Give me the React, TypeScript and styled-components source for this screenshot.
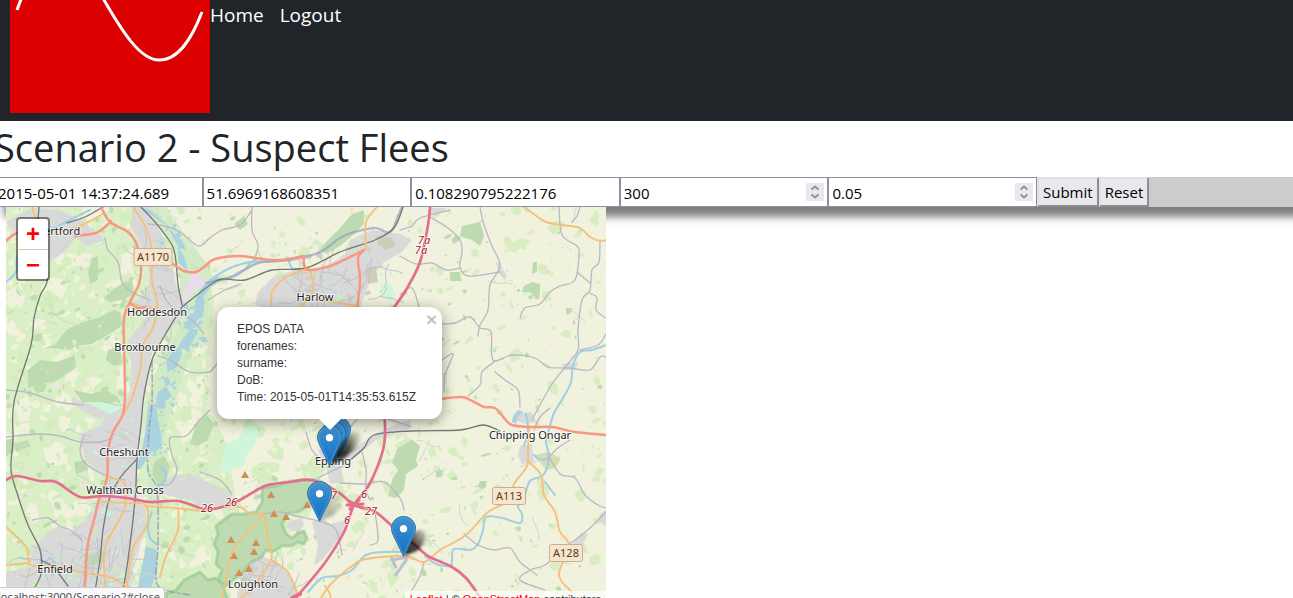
import React from "react";
import styled, { createGlobalStyle } from "styled-components";

const uiFont = `"Open Sans", "Noto Sans", sans-serif`;

const GlobalStyle = createGlobalStyle`
  *, *::before, *::after { box-sizing: border-box; }
  html, body { margin: 0; height: 100%; overflow: hidden; }
  body { background: #fff; color: #212529; font-family: ${uiFont}; font-size: 15px; }
`;

const Header = styled.header`
  display: flex;
  align-items: flex-start;
  padding: 0 10px 8px;
  background: #212529;
`;

const Logo = styled.svg`
  display: block;
  flex: none;
  width: 200px;
  height: 113px;
  background: #dc0000;
`;

const Nav = styled.nav`
  display: flex;
  gap: 16px;
`;

const NavLink = styled.a`
  color: #fff;
  font-size: 19px;
  line-height: 30px;
  text-decoration: none;
`;

const Content = styled.main`
  margin-left: -6px;
`;

const Title = styled.h1`
  margin: 0;
  padding: 2px 0 6px;
  font-size: 38px;
  font-weight: 400;
  line-height: 48px;
`;

const QueryBar = styled.form`
  display: flex;
  height: 30px;
  background: #cdcbcc;
  box-shadow: 10px 10px 8px #808080;
`;

const Fields = styled.div`
  display: flex;
  flex: 0 1 1043px;
  min-width: 0;
`;

const Field = styled.div`
  display: flex;
  flex: 1 1 0;
  align-items: center;
  min-width: 0;
  padding-right: 3px;
  border: 1px solid #8f8f9d;
  background: #fff;
`;

const FieldInput = styled.input`
  flex: 1;
  min-width: 0;
  height: 28px;
  padding: 2px 3px 0;
  border: 0;
  outline: 0;
  background: none;
  color: #000;
  font: 15px ${uiFont};
  appearance: textfield;
  &::-webkit-inner-spin-button { display: none; }
`;

const Spinner = styled.svg`
  flex: none;
  width: 18px;
  height: 18px;
  background: #e9e9ed;
  fill: none;
  stroke: #8f8f9d;
  stroke-width: 2;
`;

const BarButton = styled.button`
  padding: 0 4px;
  border: 2px outset #e0e0e4;
  background: #e9e9ed;
  color: #000;
  font: 15px ${uiFont};
`;

const MapFrame = styled.section`
  position: relative;
  max-width: 600px;
  height: 400px;
  margin-left: 12px;
  overflow: hidden;
  background: #f1f2dd;
  font-family: "Liberation Sans", Arial, sans-serif;
`;

const Tiles = styled.svg`
  display: block;
  width: 100%;
  height: 400px;
`;

const ZoomControl = styled.div`
  position: absolute;
  top: 10px;
  left: 10px;
  width: 34px;
  border: 2px solid rgba(0, 0, 0, 0.45);
  border-radius: 4px;
  background: #fff;
  background-clip: padding-box;
`;

const ZoomLink = styled.a`
  display: block;
  height: 30px;
  color: #f00;
  font: bold 24px/30px "Liberation Sans", Arial, sans-serif;
  text-align: center;
  text-decoration: none;
  & + & { border-top: 1px solid #ccc; }
`;

const Pin = styled.svg<{ $x: number; $y: number }>`
  position: absolute;
  left: ${(p) => p.$x - 12}px;
  top: ${(p) => p.$y - 41}px;
  width: 25px;
  height: 41px;
  overflow: visible;
`;

const Popup = styled.div`
  position: absolute;
  left: 211px;
  top: 100px;
  width: 225px;
  padding: 14px 20px 13px;
  border-radius: 12px;
  background: #fff;
  box-shadow: 0 3px 14px rgba(0, 0, 0, 0.4);
  color: #333;
  font-size: 12px;
  line-height: 17px;
  white-space: nowrap;
  &::after {
    content: "";
    position: absolute;
    top: 100%;
    left: 102px;
    border: 11px solid transparent;
    border-top-color: #fff;
    border-bottom: 0;
  }
`;

const PopupClose = styled.a`
  position: absolute;
  top: 4px;
  right: 5px;
  color: #c3c3c3;
  font: bold 19px/17px "Liberation Sans", Arial, sans-serif;
  text-decoration: none;
`;

const Attribution = styled.div`
  position: absolute;
  right: 0;
  bottom: 0;
  padding: 0 5px;
  background: rgba(255, 255, 255, 0.7);
  color: #333;
  font-size: 11px;
  line-height: 16px;
  a { color: #f00; text-decoration: none; }
`;

const LinkStatus = styled.div`
  position: fixed;
  left: -4px;
  bottom: -9px;
  padding: 0 4px 0 1px;
  border: 1px solid #ccc;
  border-radius: 0 4px 0 0;
  background: #f9f9fb;
  color: #444;
  font-size: 11px;
  line-height: 18px;
`;

/* Deterministic scatter for fields and copses */
function makeRandom(seed: number) {
  let s = seed;
  return () => {
    s = (s * 1664525 + 1013904223) % 4294967296;
    return s / 4294967296;
  };
}

type Box = [number, number, number, number];

function scatter(seed: number, n: number, [x0, y0, x1, y1]: Box, min: number, max: number) {
  const r = makeRandom(seed);
  let d = "";
  for (let i = 0; i < n; i++) {
    const cx = x0 + r() * (x1 - x0);
    const cy = y0 + r() * (y1 - y0);
    const size = min + r() * r() * (max - min);
    const turn = r() < 0.5 ? 0.3 + r() * 0.3 : 1.7 + r() * 0.4;
    const stretch = 0.25 + r() * 0.7;
    const corners = 5;
    for (let k = 0; k < corners; k++) {
      const a = (k / corners) * Math.PI * 2;
      const m = size * (0.6 + r() * 0.7);
      const px = Math.cos(a) * m;
      const py = Math.sin(a) * m * stretch;
      const x = cx + px * Math.cos(turn) + py * Math.sin(turn);
      const y = cy + py * Math.cos(turn) - px * Math.sin(turn);
      d += `${k ? "L" : "M"}${x.toFixed(1)} ${y.toFixed(1)}`;
    }
    d += "Z";
  }
  return d;
}

function streets(seed: number, n: number, [x0, y0, x1, y1]: Box) {
  const r = makeRandom(seed);
  let d = "";
  for (let i = 0; i < n; i++) {
    let x = x0 + r() * (x1 - x0);
    let y = y0 + r() * (y1 - y0);
    let a = (Math.floor(r() * 4) * Math.PI) / 2 + 0.3;
    d += `M${x.toFixed(1)} ${y.toFixed(1)}`;
    for (let k = 0; k < 4; k++) {
      a += (r() - 0.5) * 0.9;
      x += Math.cos(a) * 6;
      y += Math.sin(a) * 6;
      d += `L${x.toFixed(1)} ${y.toFixed(1)}`;
    }
  }
  return d;
}

/* Smooth line through a list of "x,y" points */
function curve(points: string) {
  const p = points.split(" ").map((t) => t.split(",").map(Number));
  let d = `M${p[0][0]} ${p[0][1]}`;
  for (let i = 0; i < p.length - 1; i++) {
    const a = p[i - 1] || p[i];
    const b = p[i];
    const c = p[i + 1];
    const e = p[i + 2] || c;
    d += `C${b[0] + (c[0] - a[0]) / 6} ${b[1] + (c[1] - a[1]) / 6} ${c[0] - (e[0] - b[0]) / 6} ${c[1] - (e[1] - b[1]) / 6} ${c[0]} ${c[1]}`;
  }
  return d;
}

const lines = (list: string[]) => list.map(curve).join("");

const greenBelt: Box = [6, 207, 210, 600];
const eastFields: Box = [205, 207, 606, 607];
const middle: Box = [160, 400, 420, 607];
const wholeMap: Box = [6, 207, 606, 607];

const towns = [
  "M132 207L148 207 152 218 164 238 172 262 176 285 184 300 190 312 178 322 164 335 152 352 147 375 144 400 140 430 137 470 138 500 146 510 146 530 134 560 130 607 6 607 6 572 34 566 30 552 46 534 58 526 70 532 86 520 94 505 100 494 106 480 100 474 86 460 80 440 84 432 96 428 104 420 92 416 72 404 72 398 90 404 110 414 122 408 130 392 131 362 128 340 140 326 148 314 134 302 148 290 150 262 138 240 132 228Z",
  "M258 292L272 278 300 268 322 270 345 254 350 240 372 230 400 234 412 240 402 252 384 262 372 276 366 292 360 308 272 312 255 305Z",
  "M6 222L32 208 60 210 84 222 96 232 106 240 88 246 76 238 66 250 50 262 44 250 20 240Z",
  "M160 484L176 474 196 476 212 484 232 492 232 503 206 508 190 500 170 496 160 492Z",
  "M238 588L246 566 262 556 276 562 292 578 300 607 236 607Z",
  "M312 522L322 518 330 524 346 520 342 534 330 550 322 560 314 566 318 545Z",
  "M318 450L332 446 346 454 372 436 392 426 410 420 412 428 376 440 352 460 340 462 344 482 330 484 326 466Z",
  "M516 414L532 412 536 422 526 424 514 420ZM520 446L532 444 534 462 522 464 518 456Z",
  "M496 262L500 264 507 276 505 281 498 272Z",
  "M430 208L446 208 438 216 430 214Z",
  "M562 364L578 362 576 370 564 370Z",
  "M572 544L582 532 588 534 584 542 574 550ZM600 514L606 510 606 526 598 520Z",
  "M288 522L302 518 304 526 298 532 292 530 286 526Z",
];

const woods = [
  "M40 350L56 344 66 330 82 322 98 318 114 310 120 312 122 326 112 332 102 338 92 344 76 346 70 350 50 348Z",
  "M28 370L40 360 56 362 74 356 76 368 64 376 54 382 40 384 28 388Z",
  "M104 298L112 290 124 282 132 280 134 294 122 300 110 302Z",
  "M92 258L98 256 98 280 90 284 88 272Z",
  "M74 390L90 394 106 390 116 396 112 404 98 402 82 402Z",
  "M108 350L120 346 122 364 114 366 106 360Z",
  "M196 424L206 414 214 424 208 440 198 446 190 444Z",
  "M154 462L164 456 170 466 166 482 158 484 152 474Z",
  "M462 226L480 222 484 236 480 246 472 240 460 236Z",
  "M450 272L460 272 461 281 450 281Z",
  "M524 286L532 282 540 284 540 294 536 298 530 292 522 292Z",
  "M533 262L537 262 537 272 532 274Z",
  "M398 448L412 440 420 446 416 460 418 466 406 474 404 490 396 498 388 496 392 480 398 470 392 462Z",
  "M566 308L572 308 570 314 566 314Z",
  "M340 228L352 214 364 210 364 224 352 236 340 246 326 254 320 250 328 240Z",
  "M84 556L102 550 104 562 90 566Z",
  "M14 444L28 440 30 446 16 452Z",
  "M74 462L86 460 88 470 76 474Z",
  "M6 440L14 438 14 452 6 456ZM240 580L246 574 248 584 242 588Z",
  "M234 224L244 216 248 224 240 230Z",
];

const forest =
  "M262 488L276 486 290 481 304 480 318 480 330 487 324 492 316 500 308 506 300 511 288 514 282 524 286 534 292 538 298 533 304 531 307 538 304 544 298 542 292 546 282 546 272 552 266 550 262 557 250 563 242 574 232 580 226 586 218 580 222 570 216 564 218 552 214 544 218 534 216 526 224 520 232 514 244 514 256 512 262 502ZM166 607L166 594 176 590 184 580 192 576 200 572 208 580 216 578 222 584 228 600 224 607Z";

const lakes = [
  "M138 207L150 210 164 222 174 234 182 240 186 250 180 248 174 240 168 226 158 220 150 214Z",
  "M178 248L184 256 188 270 184 268 178 262Z",
  "M200 290L208 282 218 276 222 280 210 288 204 296 204 312 196 322 190 330 186 322 194 312 196 300Z",
  "M182 340L192 328 198 332 192 342 188 350 178 348Z",
  "M172 352L180 346 182 354 176 368 168 372 166 362Z",
  "M158 392L166 386 172 396 164 402 160 408 156 404Z",
  "M148 406L156 404 158 420 162 440 158 450 150 452 146 460 140 470 136 468 142 448 146 428Z",
  "M146 546L157 550 157 572 150 590 138 587 142 566Z",
  "M513 416L518 410 524 412 518 416 516 424 512 422Z",
];

const rivers = [
  "6,282 16,272 18,256 36,238 70,220 90,210",
  "210,280 228,279 242,272 254,260 262,258",
  "196,302 206,285 226,270 250,262 270,262 296,258",
  "288,258 292,268 300,269",
  "606,345 592,350 580,352 573,365 571,382 563,398 554,413 550,426 546,442 549,456 544,474 530,481 525,495 518,506 522,514 520,523 502,518 486,517 483,530 478,544 470,550 454,549 452,560 450,566 436,564 425,556",
  "549,458 540,460 534,455",
  "545,482 555,495",
  "409,552 385,552 366,555 352,570 338,576 322,578 308,592",
  "152,512 148,525 150,538 158,545",
  "526,414 528,430 524,446",
  "44,566 50,558 56,566 52,576",
  "160,466 166,474 164,482 158,486",
];

const minorRoads = [
  "480,207 484,225 492,246 500,266 490,285 488,310 480,325 478,336",
  "430,217 448,228 460,240 462,252 460,266 468,276 500,272",
  "400,256 416,264 432,263 446,270 460,268",
  "559,207 562,235 577,246 579,255 575,280 560,286 550,292 540,304 525,308 520,318",
  "600,240 599,262 592,270 590,290 582,300 578,330 578,350 566,366 552,384 540,405 532,420",
  "577,272 590,283",
  "590,293 597,298 596,310 606,318",
  "606,334 598,345 580,350",
  "442,324 455,323 470,317 480,328 491,332 493,360 512,355 535,358 548,367 570,368 590,370 600,357 606,357",
  "494,362 482,372 480,385 468,396",
  "495,372 505,380 518,390 520,407",
  "442,360 453,354 445,375 444,392",
  "207,240 222,230 240,225 252,210",
  "252,207 252,230 258,245 255,258",
  "105,238 108,250 118,262 122,282 132,292 150,300",
  "148,224 165,226 180,232 192,242 200,246 210,238",
  "158,356 170,360 190,372 210,372",
  "6,437 40,434 60,436 80,442 100,442 112,438",
  "84,436 80,450 85,463 107,476 125,480",
  "210,410 198,422 186,436 170,438 172,455 177,470 170,484 158,484",
  "6,390 30,393 58,402 84,405",
  "32,520 48,518 60,526 70,530 82,540",
  "264,514 280,512 296,516 322,522 336,530 342,555",
  "318,478 334,470 350,463",
  "340,483 365,484 384,482 400,498 404,510",
  "362,452 366,470 366,490 370,500",
  "345,445 352,425 370,415 410,426",
  "548,455 560,474 575,478 585,495 598,505 606,508",
  "534,430 540,417 550,408",
  "548,458 558,448 570,440",
  "606,512 590,528 575,540 558,550",
  "537,575 520,562 510,548 494,550 478,545 464,534",
  "545,590 520,580 530,570 545,565 560,552",
  "424,562 420,576 412,590",
  "200,472 220,480 232,494",
  "580,207 577,216 572,222",
  "400,295 412,288 420,310",
  "400,230 412,226 420,218 450,210",
  "208,300 225,290 240,284",
  "210,372 217,364",
  "306,432 312,450 322,460",
  "160,286 166,300 176,310 192,320 204,334",
  "375,512 378,540 370,545",
];

const railways = [
  "39,207 38,235 46,260 47,282 40,296 34,318 31,345 14,402 13,440 11,470 18,496 28,525 40,550 41,574 32,592",
  "67,223 85,217 103,207",
  "141,207 155,222 172,245 176,262 178,284 182,305",
  "182,307 210,285 222,279 245,280 272,270 306,268 340,252 375,240 394,228 403,207",
  "182,307 165,335 152,360 144,395 141,425 137,460 135,500 128,560 123,590",
  "136,460 120,478 109,500 103,530 100,560 94,597",
  "350,460 364,448 374,435 410,431 460,430 483,425 500,431",
  "41,560 54,568 68,586",
];

const secondary = [
  "32,207 36,218 46,226",
  "60,232 80,226 103,214",
  "133,207 143,222 150,240 152,262 152,282 157,302 154,325 143,345 140,370 132,398 124,414",
  "132,303 146,309 158,306",
  "272,310 272,292 285,278 307,270 313,280 312,292 300,308",
  "320,300 345,304 357,306",
  "377,207 366,222 366,249",
  "524,207 535,215 546,222 562,225 580,228 590,237 600,241 606,240",
  "529,426 528,450 527,466 514,484 510,500 488,512 466,535 440,550 424,562 405,556 366,559 352,566 330,585 320,600",
  "529,462 541,475 544,495 555,512 560,532 569,545 559,575 572,592",
  "6,527 20,540 28,550 31,565 60,567 85,573 110,577 128,587",
  "6,565 30,563",
  "102,502 125,503 145,505 147,525 133,548 127,585",
  "107,477 125,484 124,510 108,540 104,560 106,600",
  "145,506 175,508 205,511 222,507 240,507 250,514 264,515 268,540 271,560 250,590 238,600",
  "178,508 178,530 166,556 160,577",
  "264,515 240,540 230,560 222,600",
  "271,560 286,570 293,582 297,594",
  "325,586 330,594 330,600",
];

const trunk = [
  "101,207 110,222 128,232 137,245 141,265 139,284 130,302 124,318 124,345 125,392 123,414 113,432 108,450 107,478 100,496 94,520 87,550 84,607",
  "6,241 15,234 28,232",
  "75,236 96,233 106,226 111,221",
  "130,303 137,308 146,307",
  "173,264 184,271 196,272 204,267 215,259 240,256 262,259 280,260 304,256",
  "304,256 304,264 309,270 330,266 348,258 364,250",
  "364,250 358,258 360,280 357,310",
  "440,399 462,397 474,402 484,407 495,408 504,418 512,425 530,427 552,427 575,432 606,435",
];

const motorways = [
  "430,207 428,225 420,262 406,290 388,318 380,350 381,390 385,425 383,450 369,485 354,505 344,532 324,564 294,600",
  "6,480 17,476 40,481 56,482 80,497 102,496 127,498 150,502 178,501 205,509 222,507 240,500 265,486 290,482 312,480 338,492 354,505 374,511 392,526 414,544 428,556 452,567 466,578 480,597",
];

const summits = [
  [245, 475], [271, 495], [307, 505], [274, 514], [286, 517], [231, 540],
  [256, 543], [234, 556], [254, 552], [239, 573], [249, 569],
];

const places: [string, number, number][] = [
  ["Hertford", 58, 235],
  ["Hoddesdon", 157, 316],
  ["Broxbourne", 145, 351],
  ["Harlow", 315, 301],
  ["Cheshunt", 124, 456],
  ["Waltham Cross", 125, 494],
  ["Enfield", 55, 573],
  ["Loughton", 253, 588],
  ["Epping", 333, 465],
  ["Chipping Ongar", 530, 439],
];

const shields: [string, number, number, number][] = [
  ["A1170", 153, 257, 38],
  ["A113", 509, 496, 33],
  ["A128", 566, 553, 33],
];

const junctions: [string, number, number][] = [
  ["7a", 424, 244], ["7a", 421, 254], ["26", 207, 512], ["26", 231, 506],
  ["7", 334, 499], ["6", 364, 498], ["27", 371, 515], ["6", 347, 524],
];

function MapTiles() {
  return (
    <Tiles viewBox="6 207 600 400" preserveAspectRatio="xMinYMin slice" aria-hidden="true">
      <rect x="6" y="207" width="600" height="400" fill="#f1f2dd" />
      <path d="M6 207H150L206 262 214 300 206 400 225 440 235 490 230 607H6Z" fill="#dbefc6" />
      <path d={scatter(11, 420, greenBelt, 3, 15)} fill="#f1f2dd" />
      <path d={scatter(12, 330, greenBelt, 2, 13)} fill="#d4edbf" />
      <path d={scatter(21, 420, eastFields, 1, 10)} fill="#d8edc2" />
      <path d={scatter(22, 170, middle, 3, 15)} fill="#d8edc2" />
      <path d={scatter(23, 120, middle, 2, 10)} fill="#eef2d8" />
      <path d={scatter(31, 300, wholeMap, 1, 6)} fill="#bddab1" />
      <path d={scatter(33, 150, greenBelt, 2, 8)} fill="#c0dcb2" />
      <path d={scatter(32, 170, wholeMap, 1, 4)} fill="#f8e2cd" />
      <path d={scatter(34, 50, wholeMap, 1, 3)} fill="#b7dce0" />
      <path d={scatter(35, 60, greenBelt, 1, 7)} fill="#ebe6de" />
      <path d="M222 458L226 444 236 440 246 428 254 424 258 434 254 446 248 452 244 466 234 468 226 474 220 468ZM92 404L104 400 112 402 120 404 118 420 106 422 94 414ZM380 286L390 282 396 296 384 300ZM522 288L530 286 530 294 524 296ZM98 400L112 402 110 408Z" fill="#cff6db" />
      <path d="M138 207H166L186 236 206 262 212 282 206 330 188 360 176 400 164 430 162 470 160 500 158 590 144 590 148 480 144 420 152 380 166 350 184 320 178 260 160 228Z" fill="#cfe8c2" fillOpacity="0.8" />
      <path d={towns.join("")} fill="#d9d9d9" />
      <path d={scatter(41, 100, [90, 400, 150, 600], 1, 5)} fill="#c8f2d8" />
      <path d={scatter(42, 80, [8, 530, 130, 600], 1, 6)} fill="#cdeabc" />
      <path d={scatter(45, 40, [8, 530, 130, 600], 1, 5)} fill="#c8f2d8" />
      <path d={scatter(46, 40, [128, 220, 180, 400], 1, 5)} fill="#cfeabf" />
      <path d={scatter(43, 70, [270, 235, 405, 310], 1, 5)} fill="#c4efcc" />
      <path d={scatter(47, 25, [160, 474, 235, 506], 1, 5)} fill="#cfeabf" />
      <path d={scatter(44, 20, [275, 250, 385, 305], 2, 5)} fill="#d3d0c2" />
      <path d="M376 236L392 238 396 246 386 250 378 244ZM366 268L376 266 378 282 368 284Z" fill="#cfccb9" />
      <path d="M188 280L196 270 206 284 196 290 184 304 182 296Z" fill="#eadcea" />
      <path d={woods.join("")} fill="#bddab1" />
      <path d={scatter(36, 45, [36, 310, 122, 388], 1, 5)} fill="#d8eec2" />
      <path d={forest} fill="#bddab1" stroke="#84bf82" strokeWidth="3" strokeOpacity="0.5" strokeLinejoin="round" />
      <path d="M534 455L548 452 561 458 556 468 546 470Z" fill="#d6dcb4" />
      <path d="M395 576L407 559M391 560L409 557M391 556L396 568" fill="none" stroke="#bdbdd2" strokeWidth="3" />
      <path d={lakes.join("")} fill="#aad3df" />
      <path d={scatter(51, 80, [148, 400, 165, 456], 1, 3)} fill="#aad3df" />
      <path d={scatter(52, 40, [182, 300, 206, 350], 1, 7)} fill="#aad3df" />
      <path d={scatter(55, 30, [154, 350, 182, 405], 1, 6)} fill="#aad3df" />
      <path d={scatter(53, 20, [154, 214, 180, 250], 1, 5)} fill="#aad3df" />
      <g fill="none" strokeLinecap="round" strokeLinejoin="round">
        <path d={lines(rivers)} stroke="#9fcfe2" strokeWidth="2" />
        <path d={streets(61, 40, [90, 400, 136, 600])} stroke="#c9c9cd" strokeWidth="1" />
        <path d={streets(62, 35, [10, 540, 120, 600])} stroke="#c4c4ca" strokeWidth="1" />
        <path d={streets(63, 32, [275, 258, 385, 305])} stroke="#c2c2ca" strokeWidth="1" />
        <path d={streets(64, 16, [245, 565, 290, 600])} stroke="#c5c5ca" strokeWidth="1" />
        <path d={streets(65, 14, [140, 230, 172, 330])} stroke="#c5c5ca" strokeWidth="1" />
        <path d={streets(66, 45, wholeMap)} stroke="#d4d6cc" strokeWidth="1" />
        <path d={lines(minorRoads)} stroke="#bab8c3" strokeWidth="1.3" />
        <path d={lines(["206,283 228,278 244,270 262,262 290,260 320,252 340,238 355,232 375,228 390,232 398,216 402,207"])} stroke="#9c9cc0" strokeWidth="2.4" strokeDasharray="7 2 3 2" strokeOpacity="0.7" />
        <path d={lines(["152,360 152,403 149,430 148,470 157,490 158,545 156,580 165,590 190,595"])} stroke="#9492b0" strokeWidth="1.6" strokeDasharray="7 3 2 3" strokeOpacity="0.7" />
        <path d={lines(railways)} stroke="#747772" strokeWidth="1.3" />
        <path d={lines(secondary)} stroke="#f5c07c" strokeWidth="1.9" />
        <path d={lines(trunk)} stroke="#f99880" strokeWidth="2.5" />
        <path d={lines(motorways)} stroke="#e46e8c" strokeWidth="2.7" />
        <path d="M349 501L362 508M350 509L359 500M347 505L363 504" stroke="#e46e8c" strokeWidth="3" />
        <path d="M292 598L300 594" stroke="#e46e8c" strokeWidth="4" />
      </g>
      {summits.map(([x, y]) => (
        <path key={`${x}-${y}`} d={`M${x} ${y - 4}l4 7h-8z`} fill="#d08f55" />
      ))}
      {shields.map(([label, x, y, w]) => (
        <g key={label}>
          <rect x={x - w / 2} y={y - 8.5} width={w} height="17" rx="2" fill="#f6e5d0" stroke="#cfae87" />
          <text x={x} y={y + 4} textAnchor="middle" fontFamily="Noto Sans, sans-serif" fontSize="11" fill="#5a3c10">{label}</text>
        </g>
      ))}
      <g fontFamily="Noto Sans, sans-serif" textAnchor="middle" paintOrder="stroke" stroke="#fff" strokeOpacity="0.7" strokeWidth="2" strokeLinejoin="round">
        {places.map(([label, x, y]) => (
          <text key={label} x={x} y={y} fontSize="11" fill="#222">{label}</text>
        ))}
        {junctions.map(([label, x, y]) => (
          <text key={`${label}${x}`} x={x} y={y} fontSize="11" fontStyle="italic" fill="#a51e33">{label}</text>
        ))}
      </g>
    </Tiles>
  );
}

function Marker({ x, y, shade = 0.8 }: { x: number; y: number; shade?: number }) {
  return (
    <Pin $x={x} $y={y} viewBox="0 0 25 41" role="img" aria-label="Marker">
      <defs>
        <linearGradient id="pin-fill" x1="0" y1="0" x2="0" y2="1">
          <stop offset="0" stopColor="#3f93d1" />
          <stop offset="1" stopColor="#126fc6" />
        </linearGradient>
        <linearGradient id="pin-edge" x1="0" y1="0" x2="0" y2="1">
          <stop offset="0" stopColor="#2e6c97" />
          <stop offset="1" stopColor="#3883b7" />
        </linearGradient>
        <linearGradient id="pin-fade" x1="0" y1="1" x2="1" y2="0">
          <stop offset="0" stopColor="#000" />
          <stop offset="0.45" stopColor="#000" stopOpacity="0.9" />
          <stop offset="1" stopColor="#000" stopOpacity="0.1" />
        </linearGradient>
        <filter id="pin-shade" x="-50%" y="-50%" width="200%" height="200%">
          <feGaussianBlur stdDeviation="1.8" />
        </filter>
      </defs>
      <path d="M13 40L18 22C23 14 30 12 34 16C37 21 32 30 26 35Z" fill="url(#pin-fade)" fillOpacity={shade} filter="url(#pin-shade)" />
      <path d="M12.5.5C5.9.5.5 5.9.5 12.4c0 2.9 1.5 6.3 2.8 9.1L12.5 40.4l9.2-18.9c1.3-2.8 2.8-6.2 2.8-9.1C24.5 5.9 19.1.5 12.5.5z" fill="url(#pin-fill)" stroke="url(#pin-edge)" />
      <path d="M12.5 1.7C6.5 1.7 1.7 6.6 1.7 12.4c0 2.7 1.4 5.8 2.7 8.6l8.1 16.6 8.1-16.6c1.3-2.8 2.7-5.9 2.7-8.6 0-5.8-4.8-10.7-10.8-10.7z" fill="none" stroke="#fff" strokeOpacity="0.15" />
      <circle cx="12.5" cy="12.7" r="4.2" fill="#fff" stroke="#2a6ca0" strokeWidth="0.8" />
    </Pin>
  );
}

function TextField({ label, value }: { label: string; value: string }) {
  return (
    <Field>
      <FieldInput aria-label={label} type="text" defaultValue={value} />
    </Field>
  );
}

function NumberField({ label, value, step }: { label: string; value: string; step: string }) {
  return (
    <Field>
      <FieldInput aria-label={label} type="number" step={step} defaultValue={value} />
      <Spinner viewBox="0 0 18 18" aria-hidden="true">
        <path d="M5.5 6.5L9 3.5l3.5 3M5.5 11.5l3.5 3 3.5-3" />
      </Spinner>
    </Field>
  );
}

export default function App() {
  return (
    <>
      <GlobalStyle />
      <Header>
        <Logo viewBox="0 0 200 113" role="img" aria-label="Logo">
          <path d="M7 10C40 -82 68 -45 94 0C112 31 130 60 149 60C169 60 182 38 192 12" fill="none" stroke="#fff" strokeWidth="3" />
        </Logo>
        <Nav>
          <NavLink href="#home">Home</NavLink>
          <NavLink href="#logout">Logout</NavLink>
        </Nav>
      </Header>
      <Content>
        <Title>Scenario 2 - Suspect Flees</Title>
        <QueryBar onSubmit={(e) => e.preventDefault()}>
          <Fields>
            <TextField label="Time" value="2015-05-01 14:37:24.689" />
            <TextField label="Latitude" value="51.6969168608351" />
            <TextField label="Longitude" value="0.108290795222176" />
            <NumberField label="Seconds" value="300" step="1" />
            <NumberField label="Radius" value="0.05" step="0.01" />
          </Fields>
          <BarButton type="submit">Submit</BarButton>
          <BarButton type="reset">Reset</BarButton>
        </QueryBar>
        <MapFrame aria-label="Map">
          <MapTiles />
          <Marker x={332} y={251} shade={0.4} />
          <Marker x={327} y={255} shade={0.4} />
          <Marker x={323} y={259} shade={0.6} />
          <Marker x={313} y={315} shade={0.25} />
          <Marker x={397} y={350} />
          <Popup>
            <PopupClose href="#close" aria-label="Close popup">×</PopupClose>
            <div>EPOS DATA</div>
            <div>forenames:</div>
            <div>surname:</div>
            <div>DoB:</div>
            <div>Time: 2015-05-01T14:35:53.615Z</div>
          </Popup>
          <ZoomControl>
            <ZoomLink href="#zoom-in" aria-label="Zoom in">+</ZoomLink>
            <ZoomLink href="#zoom-out" aria-label="Zoom out">−</ZoomLink>
          </ZoomControl>
          <Attribution>
            <a href="#leaflet">Leaflet</a> | © <a href="#osm">OpenStreetMap</a> contributors
          </Attribution>
        </MapFrame>
      </Content>
      <LinkStatus>localhost:3000/Scenario2#close</LinkStatus>
    </>
  );
}
